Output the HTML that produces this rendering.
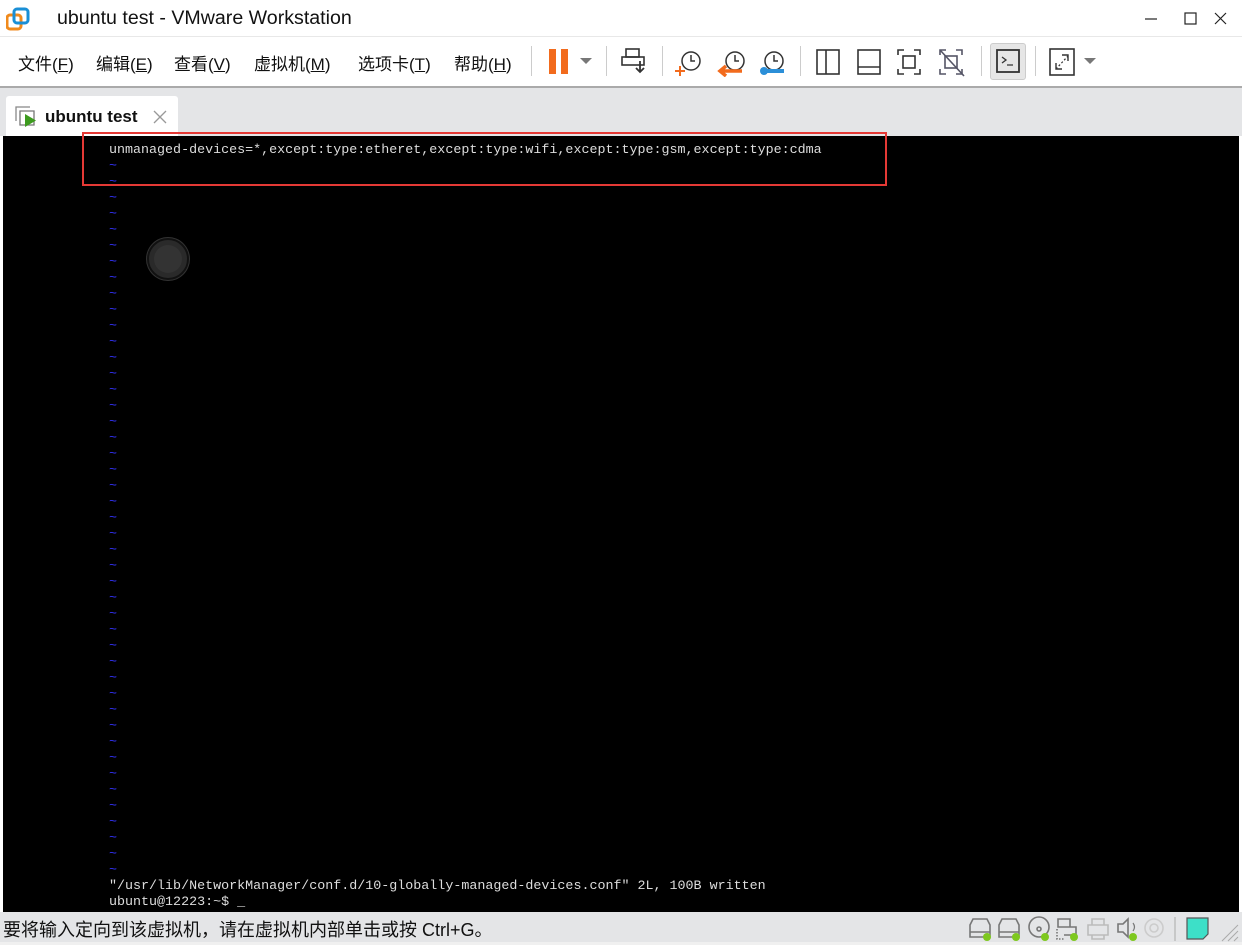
<!DOCTYPE html>
<html><head><meta charset="utf-8"><style>
*{margin:0;padding:0;box-sizing:border-box}
body{width:1242px;height:945px;background:#fff;position:relative;overflow:hidden;font-family:"Liberation Sans","Noto Sans CJK SC",sans-serif}
.abs{position:absolute}
.menu span{position:absolute;top:50px;font-size:17px;color:#111;font-family:"Liberation Sans","Noto Sans CJK SC",sans-serif}
.term{position:absolute;left:3px;top:136px;width:1236px;height:776px;background:#000}
pre{position:absolute;left:106px;top:7px;font-family:"Liberation Mono",monospace;font-size:13.35px;line-height:16px;color:#ddd}
.t{color:#3333ff}
.sep{position:absolute;top:46px;width:1px;height:30px;background:#ccc}
</style></head><body>
<div class="abs" style="left:0;top:0;width:1242px;height:36px;background:#fff"></div>
<svg class="abs" style="left:6px;top:7px" width="26" height="26" viewBox="0 0 26 26">
<rect x="1" y="8" width="14" height="14" rx="3" fill="none" stroke="#f08a1c" stroke-width="3"/>
<rect x="8" y="2" width="14" height="14" rx="3" fill="none" stroke="#1a8fd6" stroke-width="3"/>
</svg>
<div class="abs" style="left:57px;top:7px;font-size:19.6px;color:#111">ubuntu test - VMware Workstation</div>
<svg class="abs" style="left:1140px;top:10px" width="90" height="18"><line x1="5" y1="9" x2="17" y2="9" stroke="#222" stroke-width="1.2"/><rect x="45" y="3" width="11" height="11" fill="none" stroke="#222" stroke-width="1.2"/><path d="M75 3l11 11M86 3l-11 11" stroke="#222" stroke-width="1.2"/></svg>
<div class="abs" style="left:0;top:36px;width:1242px;height:1px;background:#e8e8e8"></div>
<div class="menu">
<span style="left:18px">文件(<u>F</u>)</span><span style="left:96px">编辑(<u>E</u>)</span><span style="left:174px">查看(<u>V</u>)</span><span style="left:254px">虚拟机(<u>M</u>)</span><span style="left:358px">选项卡(<u>T</u>)</span><span style="left:454px">帮助(<u>H</u>)</span>
</div>
<div class="sep" style="left:531px"></div>
<div class="abs" style="left:549px;top:49px;width:7px;height:25px;background:#f26b1d"></div>
<div class="abs" style="left:561px;top:49px;width:7px;height:25px;background:#f26b1d"></div>
<div class="abs" style="left:580px;top:58px;border:6px solid transparent;border-top:6px solid #777"></div>
<div class="sep" style="left:606px"></div>
<svg class="abs" style="left:620px;top:46px" width="30" height="30"><rect x="6" y="3" width="13" height="8" fill="none" stroke="#333" stroke-width="1.6"/><rect x="2" y="11" width="22" height="8" fill="none" stroke="#333" stroke-width="1.6"/><path d="M20 15v11M16 22l4 4 4-4" stroke="#333" stroke-width="1.8" fill="none"/></svg>
<div class="sep" style="left:662px"></div>
<svg class="abs" style="left:674px;top:47px" width="120" height="30">
<circle cx="17" cy="14" r="9" fill="none" stroke="#333" stroke-width="1.5"/><path d="M17 8v6h4" stroke="#333" stroke-width="1.5" fill="none"/><path d="M6 19v10M1 24h10" stroke="#f26b1d" stroke-width="2"/>
<circle cx="61" cy="14" r="9" fill="none" stroke="#333" stroke-width="1.5"/><path d="M61 8v6h4" stroke="#333" stroke-width="1.5" fill="none"/><path d="M46 24h22M52 19l-6 5 6 5" stroke="#f26b1d" stroke-width="3.5" fill="none"/>
<circle cx="100" cy="14" r="9" fill="none" stroke="#333" stroke-width="1.5"/><path d="M100 8v6h4" stroke="#333" stroke-width="1.5" fill="none"/><path d="M88 24h22" stroke="#2b8fd8" stroke-width="4"/><circle cx="90" cy="24" r="4" fill="#2b8fd8"/>
</svg>
<div class="sep" style="left:800px"></div>
<svg class="abs" style="left:814px;top:47px" width="160" height="30">
<rect x="3" y="3" width="22" height="24" fill="none" stroke="#333" stroke-width="1.6"/><line x1="12" y1="3" x2="12" y2="27" stroke="#333" stroke-width="1.6"/>
<rect x="44" y="3" width="22" height="24" fill="none" stroke="#333" stroke-width="1.6"/><line x1="44" y1="20" x2="66" y2="20" stroke="#333" stroke-width="1.6"/>
<path d="M84 8V3h6M100 3h6v5M106 22v5h-6M90 27h-6v-5" stroke="#333" stroke-width="1.6" fill="none"/><rect x="89" y="9" width="12" height="12" fill="none" stroke="#333" stroke-width="1.6"/>
<path d="M126 8V3h6M142 3h6v5M148 22v5h-6M132 27h-6v-5" stroke="#556" stroke-width="1.6" fill="none"/><rect x="131" y="9" width="12" height="12" fill="none" stroke="#556" stroke-width="1.6"/><line x1="126" y1="3" x2="150" y2="29" stroke="#556" stroke-width="1.6"/>
</svg>
<div class="sep" style="left:981px"></div>
<div class="abs" style="left:990px;top:43px;width:36px;height:37px;background:#e6e6e6;border:1px solid #ccc;border-radius:3px"></div>
<svg class="abs" style="left:994px;top:47px" width="28" height="28"><rect x="3" y="3" width="22" height="22" fill="none" stroke="#333" stroke-width="1.8"/><path d="M8 10l4 3-4 3M13 18h6" stroke="#333" stroke-width="1.3" fill="none"/></svg>
<div class="sep" style="left:1035px"></div>
<svg class="abs" style="left:1048px;top:47px" width="30" height="30"><rect x="2" y="2" width="24" height="26" fill="none" stroke="#333" stroke-width="1.6"/><path d="M8 22l12-13" stroke="#333" stroke-width="1.2" stroke-dasharray="2 2"/><path d="M8 16v6h6M14 8h6v6" stroke="#333" stroke-width="1.4" fill="none"/></svg>
<div class="abs" style="left:1084px;top:58px;border:6px solid transparent;border-top:6px solid #777"></div>
<div class="abs" style="left:0;top:86px;width:1242px;height:2px;background:#aaa"></div>
<div class="abs" style="left:0;top:88px;width:1242px;height:48px;background:#e4e5e7"></div>
<div class="abs" style="left:6px;top:96px;width:172px;height:40px;background:#fff;border-radius:3px 3px 0 0"></div>
<svg class="abs" style="left:14px;top:105px" width="26" height="24"><path d="M2 16V2h14" stroke="#888" stroke-width="1.3" fill="none"/><path d="M6 20V6h14v14z" stroke="#777" stroke-width="1.3" fill="#fff"/><path d="M11 9v13l11-6.5z" fill="#3d9b1f"/></svg>
<div class="abs" style="left:45px;top:107px;font-size:17px;font-weight:bold;color:#111">ubuntu test</div>
<svg class="abs" style="left:152px;top:109px" width="16" height="16"><path d="M2 2l12 12M14 2L2 14" stroke="#999" stroke-width="1.3"/></svg>
<div class="term">
<pre>unmanaged-devices=*,except:type:etheret,except:type:wifi,except:type:gsm,except:type:cdma
<span class="t">~
~
~
~
~
~
~
~
~
~
~
~
~
~
~
~
~
~
~
~
~
~
~
~
~
~
~
~
~
~
~
~
~
~
~
~
~
~
~
~
~
~
~
~
~</span>
"/usr/lib/NetworkManager/conf.d/10-globally-managed-devices.conf" 2L, 100B written
ubuntu@12223:~$ _</pre>
<div class="abs" style="left:144px;top:102px;width:42px;height:42px;border-radius:50%;background:#2a2a2a;border:2px solid #111;box-shadow:0 0 0 1px #333"></div>
<div class="abs" style="left:151px;top:109px;width:28px;height:28px;border-radius:50%;background:#333"></div>
</div>
<div class="abs" style="left:82px;top:132px;width:805px;height:54px;border:2px solid #e53935"></div>
<div class="abs" style="left:0;top:912px;width:1242px;height:30px;background:#e4e5e7"></div>
<div class="abs" style="left:3px;top:916px;font-size:18px;color:#111;font-family:'Liberation Sans','Noto Sans CJK SC',sans-serif">要将输入定向到该虚拟机，请在虚拟机内部单击或按 Ctrl+G。</div>
<svg class="abs" style="left:966px;top:915px" width="276" height="28">
<g stroke="#777" stroke-width="1.6" fill="none">
<path d="M4 22V10l3-6h14l3 6v12zM4 17h20"/><path d="M33 22V10l3-6h14l3 6v12zM33 17h20"/>
<circle cx="73" cy="12" r="10"/><circle cx="73" cy="14" r="2"/>
<path d="M92 4h12v8h-12zM98 12h12v8h-12"/><path d="M91 14v10h8" stroke-dasharray="1.5 1.5"/>
<path d="M122 10h20v10h-20zM126 10V4h12v6M126 20v4h12v-4" stroke="#bbb"/>
<path d="M152 9h5l5-5v18l-5-5h-5z"/><path d="M167 8q3 4 0 8" stroke-width="1.2"/>
<circle cx="188" cy="13" r="9" stroke="#ccc"/><circle cx="188" cy="13" r="4" stroke="#ccc"/>
</g>
<circle cx="21" cy="22" r="4" fill="#7ec81f"/><circle cx="50" cy="22" r="4" fill="#7ec81f"/><circle cx="79" cy="22" r="4" fill="#7ec81f"/><circle cx="108" cy="22" r="4" fill="#7ec81f"/><circle cx="167" cy="22" r="4" fill="#7ec81f"/>
<line x1="209" y1="2" x2="209" y2="26" stroke="#aaa"/>
<path d="M221 3h21v16l-5 5h-16z" fill="#3de0c8" stroke="#555" stroke-width="1.2"/>
<path d="M256 26l16-16M262 26l10-10M268 26l4-4" stroke="#aaa"/>
</svg>
<div class="abs" style="left:0;top:942px;width:1242px;height:3px;background:#f0f0f0"></div>
</body></html>
